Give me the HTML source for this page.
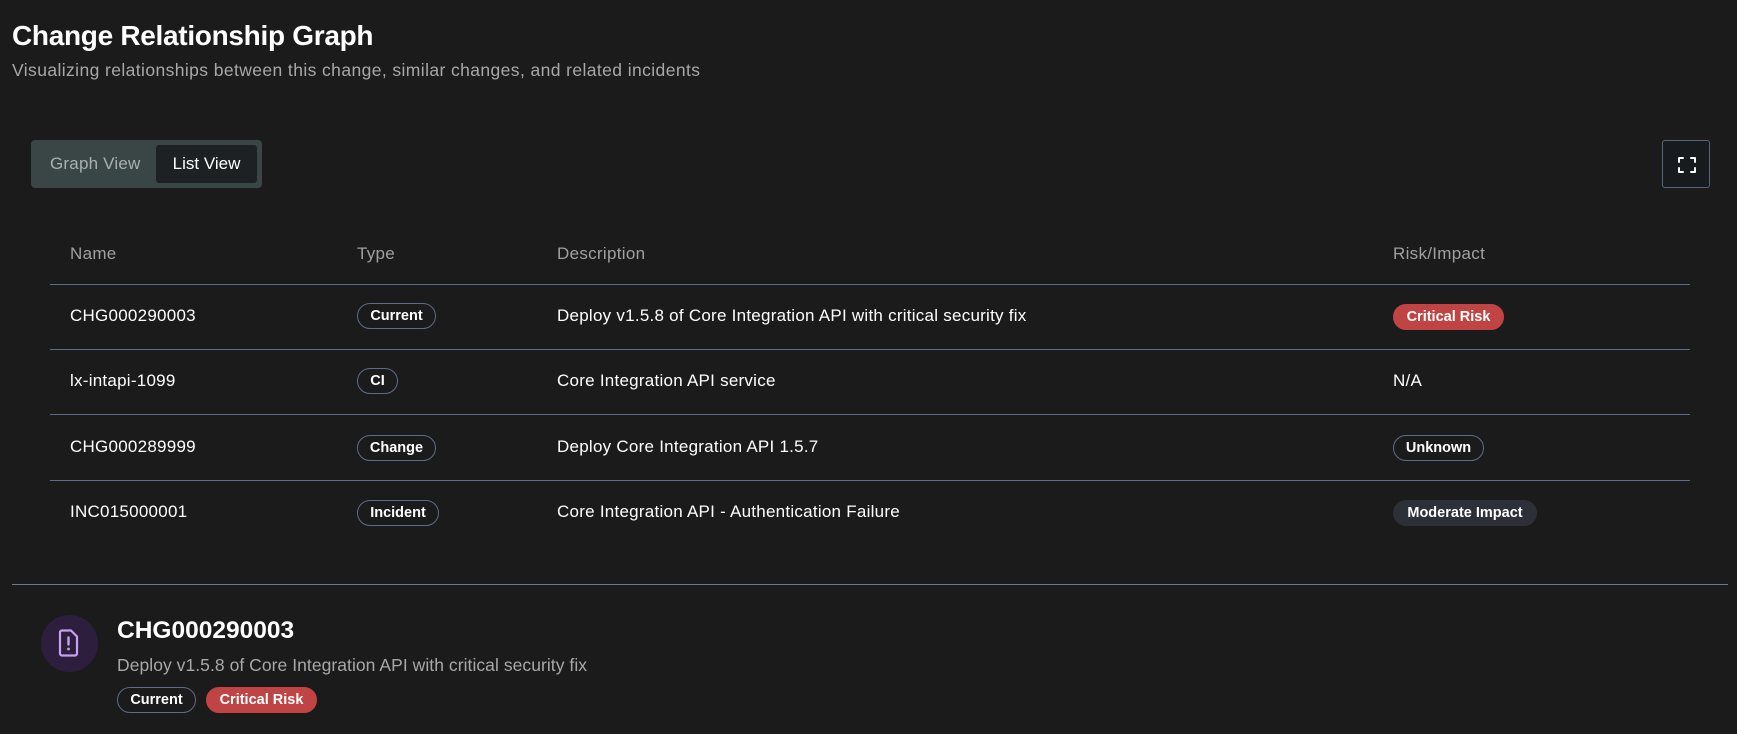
<!DOCTYPE html>
<html><head><meta charset="utf-8"><style>
*{box-sizing:border-box;margin:0;padding:0}
body{width:1737px;height:734px;background:#1b1b1b;font-family:"Liberation Sans",sans-serif;color:#fff;position:relative;overflow:hidden}
.abs{position:absolute;white-space:nowrap}
h1{position:absolute;left:12px;top:20px;font-size:28px;font-weight:bold;letter-spacing:-0.3px}
.sub{left:12px;top:60px;font-size:17.5px;letter-spacing:0.4px;color:#a8a8a8}
.toggle{position:absolute;left:31px;top:140px;width:231px;height:48px;background:#3a4545;border-radius:4px}
.toggle .g{position:absolute;left:19px;top:14px;font-size:17px;letter-spacing:0.2px;color:#a9b0b0}
.toggle .l{position:absolute;left:125px;top:5px;width:101px;height:38px;background:#1d2123;border-radius:3px;font-size:17px;line-height:38px;text-align:center;color:#fff}
.fs{position:absolute;left:1662px;top:140px;width:48px;height:48px;border:1px solid #56657a;border-radius:3px;background:#181b1e}
.th{top:244px;font-size:17px;letter-spacing:0.3px;color:#a0a0a0}
.line{position:absolute;left:50px;width:1640px;height:1px;background:#5d6d88}
.td{font-size:17px;letter-spacing:0.25px;color:#fff}
.badge{position:absolute;height:26px;border-radius:13px;font-size:14.5px;font-weight:bold;line-height:24px;text-align:center;border:1px solid #5d6d88;color:#fff}
.red{background:#c04444;border-color:#c04444}
.mod{background:#2e3039;border-color:#2e3039}
</style></head><body>
<h1>Change Relationship Graph</h1>
<div class="abs sub">Visualizing relationships between this change, similar changes, and related incidents</div>
<div class="toggle"><span class="g">Graph View</span><div class="l">List View</div></div>
<div class="fs"><svg width="48" height="48" viewBox="0 0 48 48"><path d="M16 21v-4h4M28 17h4v4M32 27v4h-4M20 31h-4v-4" fill="none" stroke="#fff" stroke-width="2" stroke-linecap="round" stroke-linejoin="round"/></svg></div>

<div class="abs th" style="left:70px">Name</div>
<div class="abs th" style="left:357px">Type</div>
<div class="abs th" style="left:557px">Description</div>
<div class="abs th" style="left:1393px">Risk/Impact</div>

<div class="line" style="top:284px"></div>
<div class="line" style="top:349px"></div>
<div class="line" style="top:414px"></div>
<div class="line" style="top:480px"></div>

<div class="abs td" style="left:70px;top:306px">CHG000290003</div>
<div class="badge" style="left:357px;top:303px;width:79px">Current</div>
<div class="abs td" style="left:557px;top:306px">Deploy v1.5.8 of Core Integration API with critical security fix</div>
<div class="badge red" style="left:1393px;top:304px;width:111px">Critical Risk</div>

<div class="abs td" style="left:70px;top:371px">lx-intapi-1099</div>
<div class="badge" style="left:357px;top:368px;width:41px">CI</div>
<div class="abs td" style="left:557px;top:371px">Core Integration API service</div>
<div class="abs td" style="left:1393px;top:371px">N/A</div>

<div class="abs td" style="left:70px;top:437px">CHG000289999</div>
<div class="badge" style="left:357px;top:435px;width:79px">Change</div>
<div class="abs td" style="left:557px;top:437px">Deploy Core Integration API 1.5.7</div>
<div class="badge" style="left:1393px;top:435px;width:91px">Unknown</div>

<div class="abs td" style="left:70px;top:502px">INC015000001</div>
<div class="badge" style="left:357px;top:500px;width:82px">Incident</div>
<div class="abs td" style="left:557px;top:502px">Core Integration API - Authentication Failure</div>
<div class="badge mod" style="left:1393px;top:500px;width:144px">Moderate Impact</div>

<div style="position:absolute;left:12px;top:584px;width:1716px;height:1px;background:#6a7a95"></div>

<div style="position:absolute;left:41px;top:615px;width:57px;height:57px;border-radius:50%;background:#2d1e3e"></div>
<svg style="position:absolute;left:41px;top:615px" width="57" height="57" viewBox="0 0 57 57"><path d="M21 15.5h9l6 6v17a2 2 0 0 1-2 2h-13a2 2 0 0 1-2-2v-21a2 2 0 0 1 2-2z" fill="none" stroke="#c9a0f0" stroke-width="2.2" stroke-linejoin="round"/><path d="M27.5 22.5v7" stroke="#c9a0f0" stroke-width="2.4" stroke-linecap="round"/><circle cx="27.5" cy="34" r="1.4" fill="#c9a0f0"/></svg>
<div class="abs" style="left:117px;top:617px;font-size:24.5px;font-weight:bold">CHG000290003</div>
<div class="abs" style="left:117px;top:655px;font-size:17.5px;letter-spacing:0.05px;color:#a8a8a8">Deploy v1.5.8 of Core Integration API with critical security fix</div>
<div class="badge" style="left:117px;top:687px;width:79px">Current</div>
<div class="badge red" style="left:206px;top:687px;width:111px">Critical Risk</div>
</body></html>
